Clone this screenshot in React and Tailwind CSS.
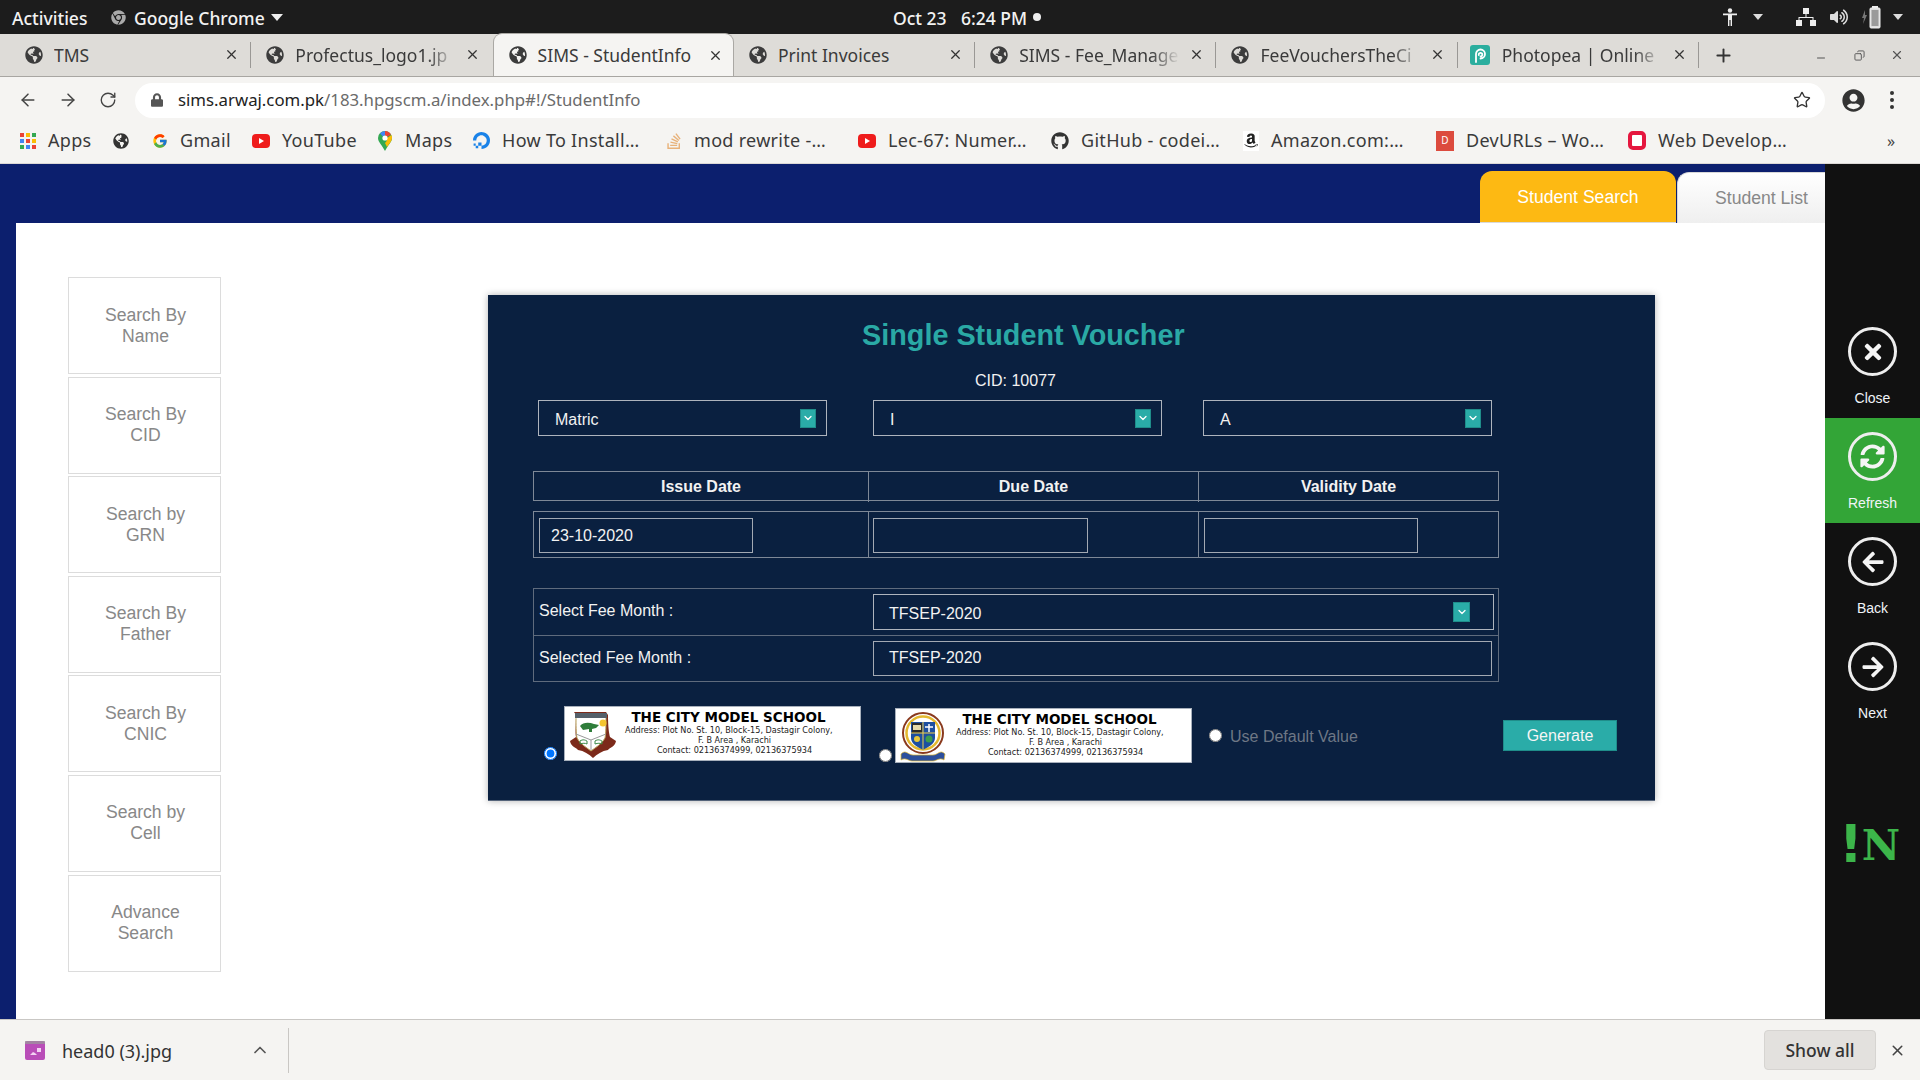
import React from "react";
import { FaGlobeAmericas, FaChrome, FaGithub, FaStackOverflow, FaVolumeUp, FaSyncAlt, FaArrowLeft, FaArrowRight, FaTimes, FaUserCircle, FaLock, FaAmazon } from "react-icons/fa";
import { FcGoogle } from "react-icons/fc";
import { SiDigitalocean } from "react-icons/si";
import { ArrowLeft, ArrowRight, RotateCw, Star, ChevronDown, ChevronUp, X, Plus, Minus, Copy } from "lucide-react";

const Globe = () => <FaGlobeAmericas className="w-[18px] h-[18px] text-[#3c3c3c] shrink-0" />;

const YT = () => (
  <svg width="18" height="16" viewBox="0 0 18 16" className="shrink-0">
    <rect x="0" y="1" width="18" height="14" rx="4" fill="#ef1c1c" />
    <path d="M7 5l5 3-5 3z" fill="#fff" />
  </svg>
);

function Tab({ title, active, fade, icon, sep }) {
  return (
    <div className={`relative w-[241.3px] h-[43px] flex items-center pl-[15px] shrink-0 ${active ? "bg-[#f5f4f2] border border-b-0 border-[#aaa8a4] rounded-t-[9px] z-10" : ""}`}>
      {icon || <Globe />}
      <span className={`ml-[11px] w-[161px] whitespace-nowrap overflow-hidden text-[17.5px] leading-[26px] text-[#3a3a3a] ${fade ? "[mask-image:linear-gradient(to_right,black_82%,transparent)]" : ""}`}>{title}</span>
      <X className="w-[15px] h-[15px] text-[#333] ml-[9px]" strokeWidth={2} />
      {sep && <span className="absolute right-0 top-[9px] h-[26px] w-px bg-[#9a9895]" />}
    </div>
  );
}

const Photopea = () => (
  <svg width="20" height="20" viewBox="0 0 20 20" className="shrink-0 -ml-[3px] mr-[1px]">
    <rect width="20" height="20" rx="3" fill="#2bae9e" />
    <path d="M6 17V9a4.5 4.5 0 1 1 4.5 4.5M8.8 10a1.8 1.8 0 1 1 1.8 1.4" fill="none" stroke="#fff" strokeWidth="1.8" strokeLinecap="round" />
  </svg>
);

const AppsIcon = () => {
  const c = ["#ea4335", "#fbbc05", "#34a853", "#4285f4", "#ea4335", "#fbbc05", "#34a853", "#4285f4", "#ea4335"];
  return (
    <svg width="16" height="16" viewBox="0 0 16 16" className="shrink-0">
      {c.map((f, i) => (
        <rect key={i} x={(i % 3) * 6} y={Math.floor(i / 3) * 6} width="4" height="4" fill={f} />
      ))}
    </svg>
  );
};

const MapsPin = () => (
  <svg width="16" height="20" viewBox="0 0 16 20" className="shrink-0">
    <path d="M8 0a7 7 0 0 1 7 7c0 4-4 7-7 13C5 14 1 11 1 7a7 7 0 0 1 7-7z" fill="#34a853" />
    <path d="M3 2.500A7 7 0 0 1 8 0v4.500a2.500 2.500 0 0 0-2 1z" fill="#4285f4" />
    <path d="M8 0a7 7 0 0 1 6 3.500L10 6a2.500 2.500 0 0 0-2-1.500z" fill="#ea4335" />
    <path d="M15 7c0 3-3 6-5 9L8 12c2-2 2-3 2-5l4.500-3c.3 1 .5 2 .5 3z" fill="#fbbc05" />
    <circle cx="8" cy="7" r="2.600" fill="#fff" />
  </svg>
);

const bookmarks = [
  { w: 93, icon: <AppsIcon />, t: "Apps" },
  { w: 39, icon: <FaGlobeAmericas className="w-4 h-4 text-[#333]" />, t: "" },
  { w: 100, icon: <FcGoogle className="w-4 h-4 shrink-0" />, t: "Gmail" },
  { w: 125, icon: <YT />, t: "YouTube" },
  { w: 96, icon: <MapsPin />, t: "Maps" },
  { w: 193, icon: <SiDigitalocean className="w-[17px] h-[17px] text-[#1a82e8] shrink-0" />, t: "How To Install…" },
  { w: 192, icon: <FaStackOverflow className="w-4 h-[18px] text-[#e8b27a] shrink-0" />, t: "mod rewrite -…" },
  { w: 193, icon: <YT />, t: "Lec-67: Numer…" },
  { w: 192, icon: <FaGithub className="w-[18px] h-[18px] text-[#333] shrink-0" />, t: "GitHub - codei…" },
  { w: 193, icon: <span className="w-4 h-5 bg-white flex items-center justify-center shrink-0"><FaAmazon className="w-[14px] h-[17px] text-[#222]" /></span>, t: "Amazon.com:…" },
  { w: 192, icon: <span className="w-[18px] h-[20px] bg-[#dc4b3e] text-white text-[10px] flex items-center justify-center shrink-0">D</span>, t: "DevURLs – Wo…" },
  { w: 193, icon: <span className="w-[18px] h-[19px] rounded-[5px] border-[4px] border-[#e5173f] bg-white shrink-0" />, t: "Web Develop…" },
];

function Arrow({ className = "" }) {
  return (
    <span className={`w-[16px] h-[19px] bg-[#2aaca8] border border-[#1f8d8a] flex items-center justify-center ${className}`}>
      <ChevronDown className="w-[12px] h-[12px] text-white" strokeWidth={2.5} />
    </span>
  );
}

function Select({ label, className = "" }) {
  return (
    <div className={`w-[289px] h-[36px] border border-[#aeb4bd] flex items-center justify-between pl-[16px] pr-[10px] text-[#f2f2f2] ${className}`}>
      <span className="pt-[3px]">{label}</span>
      <Arrow />
    </div>
  );
}

function Field({ value = "", className = "" }) {
  return (
    <div className={`h-[35px] border border-[#a3a9b3] flex items-center pl-[11px] text-[#f2f2f2] ${className}`}>{value}</div>
  );
}

const Crest1 = () => (
  <svg width="52" height="50" viewBox="0 0 52 50" className="shrink-0">
    <path d="M8 2h32l2 3c0 12 1 18 2 22l6 4c-1 6-6 6-8 9-6 1-11 4-15 8-4-4-9-7-15-8-2-3-7-3-8-9l6-4C9 23 10 15 10 5z" fill="#7c2a1a" />
    <path d="M10 5h30c0 10 0 18-1 23-3 6-9 9-14 13-5-4-11-7-14-13-1-5-1-13-1-23z" fill="#fff" stroke="#b9a05a" strokeWidth="1" />
    <rect x="9" y="3" width="32" height="5" fill="#55606a" />
    <path d="M14 16c3-4 9-4 14-2l5 1-3 3-4 1v3h-3v-3l-6 1z" fill="#2f7d3a" />
    <circle cx="37" cy="13" r="3.500" fill="#f4c430" />
    <path d="M10 24l15 6 15-6M25 30v10" stroke="#999" strokeWidth="1" fill="none" />
    <path d="M14 31c3-2 5-1 7 0v3c-2-1-4-1-7 0zM29 31c3-2 5-1 7 0v3c-2-1-4-1-7 0z" fill="none" stroke="#3a8a45" strokeWidth="1" />
  </svg>
);

const Crest2 = () => (
  <svg width="46" height="50" viewBox="0 0 46 50" className="shrink-0">
    <circle cx="23" cy="21" r="20" fill="#fff" stroke="#8a3a1e" strokeWidth="2" />
    <circle cx="23" cy="21" r="16.500" fill="#fff" stroke="#e4b92f" strokeWidth="2.500" />
    <path d="M11 10h24v16c0 6-7 9-12 12-5-3-12-6-12-12z" fill="#1d4fa0" />
    <rect x="12" y="11" width="10" height="10" fill="#2b2b2b" />
    <rect x="13" y="13" width="8" height="5" fill="#e5d9a8" />
    <path d="M29 12v8M25 15h8" stroke="#fff" strokeWidth="1.500" />
    <path d="M11 21h24M23 10v28" stroke="#f2d04a" strokeWidth="1" />
    <circle cx="29" cy="27" r="3.500" fill="#3d9c4d" />
    <circle cx="17" cy="27" r="3" fill="#e8c93a" />
    <path d="M1 42c5-5 7 1 12 1 6 0 15 0 20 0s7-6 12-1l-1 6c-4-3-8 1-11 1H12c-3 0-7-4-11-1z" fill="#2c4f9c" stroke="#e4b92f" strokeWidth=".7" />
  </svg>
);

function Banner({ crest, crestClass, className = "" }) {
  return (
    <div className={`w-[297px] h-[55px] bg-white border border-[#a8b0bc] flex text-black overflow-hidden font-['DejaVu_Sans',sans-serif] ${className}`}>
      <div className={`shrink-0 pt-[3px] ${crestClass}`}>{crest}</div>
      <div className="w-[207px] shrink-0 text-center text-[#222] text-[8.1px] leading-[10px] whitespace-nowrap">
        <div className="text-[13.5px] leading-[14px] font-bold text-black mt-[3px]">THE CITY MODEL SCHOOL</div>
        <div className="mt-[1px]">Address: Plot No. St. 10, Block-15, Dastagir Colony,</div>
        <div className="pl-[12px]">F. B Area , Karachi</div>
        <div className="pl-[12px]">Contact: 02136374999, 02136375934</div>
      </div>
    </div>
  );
}

function SideItem({ a, b }) {
  return (
    <div className="w-[153px] h-[97px] border border-[#dcdcdc] flex flex-col items-center justify-center text-[17.6px] leading-[21px] text-[#888] pl-[2px]">
      <span>{a}</span>
      <span>{b}</span>
    </div>
  );
}

function Action({ icon, label, active }) {
  return (
    <div className={`h-[105px] flex flex-col items-center pt-[14px] ${active ? "bg-[#33a537]" : ""}`}>
      <span className="w-[49px] h-[49px] rounded-full border-[3px] border-[#eee] flex items-center justify-center text-[#f5f5f5]">{icon}</span>
      <span className="mt-[13px] text-[14px] leading-[18px] text-[#f0f4f8]">{label}</span>
    </div>
  );
}

export default function App() {
  return (
    <div className="w-[1920px] h-[1080px] overflow-hidden flex flex-col font-['Noto_Sans',sans-serif] bg-white">
      {/* OS bar */}
      <div className="h-[34px] bg-[#1c1c1c] flex items-center text-[#f2f2f2] text-[17.5px] leading-[24px] font-medium shrink-0">
        <div className="w-[893px] flex items-center shrink-0">
          <span className="ml-[12px] w-[99px] pt-[2px]">Activities</span>
          <FaChrome className="w-[15px] h-[15px] text-[#aaa]" />
          <span className="ml-[8px] pt-[2px]">Google Chrome</span>
          <span className="ml-[6px] w-0 h-0 border-x-[6px] border-x-transparent border-t-[7px] border-t-[#eee]" />
        </div>
        <span className="w-[68px] pt-[2px] shrink-0">Oct 23</span>
        <span className="w-[72px] pt-[2px] shrink-0">6:24 PM</span>
        <span className="w-[8px] h-[8px] rounded-full bg-[#eee] shrink-0" />
        <div className="ml-auto flex items-center mr-[10px]">
          <span className="w-[28px] flex justify-center">
            <svg width="14" height="18" viewBox="0 0 14 18" fill="#eee"><circle cx="7" cy="2.5" r="2.2" /><path d="M0 5.500h14v1.800H9V18H7.600v-6H6.400v6H5V7.300H0z" /></svg>
          </span>
          <span className="w-[28px] flex justify-center"><span className="w-0 h-0 border-x-[5.5px] border-x-transparent border-t-[6px] border-t-[#ddd]" /></span>
          <span className="w-[20px]" />
          <span className="w-[28px] flex justify-center">
            <svg width="20" height="18" viewBox="0 0 20 18" fill="#eee"><rect x="7" y="0" width="6" height="6" /><rect x="0" y="12" width="6" height="6" /><rect x="14" y="12" width="6" height="6" /><path d="M9.500 6h1v3H17.500v3h-1V10h-13v2h-1V9h7z" /></svg>
          </span>
          <span className="w-[38px] flex justify-center"><FaVolumeUp className="w-[18px] h-[16px] text-[#ddd]" /></span>
          <span className="w-[28px] flex justify-center">
            <svg width="20" height="24" viewBox="0 0 20 24" fill="none"><path d="M3 5L0 13h2l-1 6 4-9H3z" fill="#777" /><rect x="8" y="3" width="10" height="20" rx="1" fill="#ddd" stroke="#eee" /><rect x="10" y="1" width="6" height="2" fill="#eee" /><rect x="9.500" y="5" width="7" height="16" fill="#1c1c1c" opacity=".35" /></svg>
          </span>
          <span className="w-[24px] flex justify-center"><span className="w-0 h-0 border-x-[5.5px] border-x-transparent border-t-[6px] border-t-[#ddd]" /></span>
        </div>
      </div>

      {/* Tab strip */}
      <div className="h-[43px] bg-[#dedcd8] border-b border-[#a8a6a2] flex items-end pl-[10px] shrink-0">
        <Tab title="TMS" sep />
        <Tab title="Profectus_logo1.jp" fade />
        <Tab title="SIMS - StudentInfo" active />
        <Tab title="Print Invoices" sep />
        <Tab title="SIMS - Fee_Manage" fade sep />
        <Tab title="FeeVouchersTheCi" fade sep />
        <Tab title="Photopea | Online" fade sep icon={<Photopea />} />
        <div className="w-[48px] h-[42px] flex items-center justify-center"><Plus className="w-[21px] h-[21px] text-[#333]" strokeWidth={2.2} /></div>
        <div className="ml-auto h-[42px] flex items-center pr-[4px] text-[#555]">
          <span className="w-[38px] flex justify-center"><Minus className="w-[12px] h-[12px] mt-[6px]" /></span>
          <span className="w-[38px] flex justify-center"><Copy className="w-[11px] h-[11px] -scale-x-100" /></span>
          <span className="w-[38px] flex justify-center"><X className="w-[14px] h-[14px]" /></span>
        </div>
      </div>

      {/* Toolbar */}
      <div className="h-[46px] bg-[#f5f4f2] flex items-center shrink-0">
        <div className="w-[135px] flex items-center text-[#444] shrink-0">
          <ArrowLeft className="w-[20px] h-[20px] ml-[18px]" strokeWidth={1.8} />
          <ArrowRight className="w-[20px] h-[20px] ml-[20px]" strokeWidth={1.8} />
          <RotateCw className="w-[18px] h-[18px] ml-[21px]" strokeWidth={1.8} />
        </div>
        <div className="w-[1690px] h-[35px] rounded-full bg-white flex items-center pl-[16px] pr-[14px] shrink-0">
          <FaLock className="w-[12px] h-[14px] text-[#555]" />
          <span className="ml-[15px] text-[16.8px] text-[#222] whitespace-nowrap">sims.arwaj.com.pk<span className="text-[#6b6b6b]">/183.hpgscm.a/index.php#!/StudentInfo</span></span>
          <Star className="w-[18px] h-[18px] ml-auto text-[#333]" strokeWidth={1.8} />
        </div>
        <FaUserCircle className="w-[23px] h-[23px] ml-[17px] text-[#333]" />
        <span className="ml-[25px] flex flex-col gap-[3px]">
          <span className="w-[4px] h-[4px] rounded-full bg-[#333]" />
          <span className="w-[4px] h-[4px] rounded-full bg-[#333]" />
          <span className="w-[4px] h-[4px] rounded-full bg-[#333]" />
        </span>
      </div>

      {/* Bookmarks */}
      <div className="h-[41px] bg-[#f5f4f2] border-b border-[#dcd8d6] flex items-center pl-[20px] pb-[5px] text-[18px] tracking-[0.3px] text-[#3a3a3a] shrink-0">
        {bookmarks.map((b, i) => (
          <div key={i} className="flex items-center gap-[12px] shrink-0 whitespace-nowrap" style={{ width: b.w }}>
            {b.icon}
            {b.t && <span>{b.t}</span>}
          </div>
        ))}
        <span className="ml-[66px] text-[#444] text-[16px]">»</span>
      </div>

      {/* Page */}
      <div className="flex-1 min-h-0 flex font-['Liberation_Sans',sans-serif] text-[16px]">
        <div className="w-[1825px] bg-[#0c1f6e] flex flex-col shrink-0">
          <div className="h-[59px] flex items-end justify-end shrink-0">
            <div className="w-[196px] h-[52px] pt-[2px] rounded-t-[12px] bg-[#fdb913] text-white text-[17.6px] flex items-center justify-center border-b border-[#d9d9d9]">Student Search</div>
            <div className="w-[148px] ml-px h-[51px] pl-[20px] rounded-tl-[12px] bg-gradient-to-b from-white to-[#efefef] border-t border-l border-[#d8d8d8] text-[#888] text-[17.6px] flex items-center justify-center">Student List</div>
          </div>
          <div className="flex-1 min-h-0 ml-[16px] bg-white flex items-start">
            <div className="ml-[52px] mt-[54px] flex flex-col gap-[2.6px] shrink-0">
              <SideItem a="Search By" b="Name" />
              <SideItem a="Search By" b="CID" />
              <SideItem a="Search by" b="GRN" />
              <SideItem a="Search By" b="Father" />
              <SideItem a="Search By" b="CNIC" />
              <SideItem a="Search by" b="Cell" />
              <SideItem a="Advance" b="Search" />
            </div>

            {/* Card */}
            <div className="ml-[267px] mt-[72px] w-[1167px] h-[506px] bg-[#0a2040] border-b border-[#55647a] shadow-[0_0_7px_rgba(0,0,0,0.3)] text-[#f2f2f2] shrink-0">
              <h2 className="pl-[374px] pt-[24px] text-[28.8px] leading-[33px] font-bold text-[#2aa9a5] whitespace-nowrap">Single Student Voucher</h2>
              <div className="pl-[487px] mt-[20px] leading-[18px]">CID: 10077</div>
              <div className="pl-[50px] mt-[10px] flex">
                <Select label="Matric" />
                <Select label="I" className="ml-[46px]" />
                <Select label="A" className="ml-[41px]" />
              </div>

              <div className="ml-[45px] mt-[35px] w-[966px] h-[30px] border border-[#7e8897] grid grid-cols-[334px_330px_1fr] font-bold text-center leading-[30px]">
                <div>Issue Date</div>
                <div className="border-l border-[#7e8897]">Due Date</div>
                <div className="border-l border-[#7e8897]">Validity Date</div>
              </div>
              <div className="ml-[45px] mt-[10px] w-[966px] h-[47px] border border-[#7e8897] grid grid-cols-[334px_330px_1fr] items-center">
                <div className="pl-[5px] pt-[2px]"><Field value="23-10-2020" className="w-[214px]" /></div>
                <div className="pl-[4px] pt-[2px] h-full flex items-center border-l border-[#7e8897]"><Field className="w-[215px]" /></div>
                <div className="pl-[5px] pt-[2px] h-full flex items-center border-l border-[#7e8897]"><Field className="w-[214px]" /></div>
              </div>

              <div className="ml-[45px] mt-[30px] w-[966px] h-[94px] border border-[#5f6b7d] flex flex-col">
                <div className="h-[47px] flex border-b border-[#5f6b7d]">
                  <div className="w-[339px] pl-[5px] pt-[12px] leading-[20px]">Select Fee Month :</div>
                  <div className="pt-[5px]">
                    <div className="w-[621px] h-[36px] border border-[#aeb4bd] flex items-center pl-[15px]">
                      <span className="pt-[4px]">TFSEP-2020</span>
                      <Arrow className="ml-auto mr-[23px] h-[20px] w-[17px]" />
                    </div>
                  </div>
                </div>
                <div className="h-[46px] flex">
                  <div className="w-[339px] pl-[5px] pt-[12px] leading-[20px]">Selected Fee Month :</div>
                  <div className="pt-[5px]"><Field value="TFSEP-2020" className="w-[619px] pl-[15px]" /></div>
                </div>
              </div>

              <div className="mt-[24px] pl-[56px] flex items-start">
                <input type="radio" name="head" defaultChecked className="w-[13px] h-[13px] m-0 mt-[41px] shrink-0" />
                <Banner crest={<Crest1 />} crestClass="w-[60px] pl-[1px]" className="ml-[7px]" />
                <input type="radio" name="head" className="w-[13px] h-[13px] m-0 mt-[43px] ml-[18px] shrink-0" />
                <Banner crest={<Crest2 />} crestClass="w-[60px] pl-[4px]" className="ml-[3px] mt-[2px]" />
                <input type="radio" name="def" className="w-[13px] h-[13px] m-0 mt-[23px] ml-[17px] shrink-0" />
                <span className="ml-[8px] mt-[22px] text-[#6e7785] leading-[18px] whitespace-nowrap">Use Default Value</span>
                <button className="ml-auto mr-[38px] mt-[14px] w-[114px] h-[31px] bg-[#2aaca8] border border-[#1f8d8a] text-[#f5f5f5] text-[16px] shrink-0">Generate</button>
              </div>
            </div>
          </div>
        </div>

        {/* Right rail */}
        <div className="w-[95px] bg-[#111] pt-[149px] flex flex-col shrink-0">
          <Action icon={<FaTimes className="w-[24px] h-[24px]" />} label="Close" />
          <Action icon={<FaSyncAlt className="w-[25px] h-[25px]" />} label="Refresh" active />
          <Action icon={<FaArrowLeft className="w-[24px] h-[24px]" />} label="Back" />
          <Action icon={<FaArrowRight className="w-[24px] h-[24px]" />} label="Next" />
          <div className="mt-[89px] pl-[14px] flex items-end font-bold text-[#3cb54a] leading-none">
            <span className="font-['DejaVu_Sans',sans-serif] text-[52px] leading-[44px] -mr-[1px]">!</span>
            <span className="font-['DejaVu_Serif',serif] text-[42px] leading-[40px] tracking-[-2px]">N</span>
          </div>
        </div>
      </div>

      {/* Download bar */}
      <div className="h-[61px] bg-[#f5f4f2] border-t border-[#c9c7c4] flex items-center shrink-0">
        <svg width="20" height="19" viewBox="0 0 20 19" className="ml-[25px] shrink-0">
          <rect width="20" height="19" rx="2" fill="#b94db8" />
          <rect width="20" height="3" fill="#9a9a9a" opacity=".7" />
          <path d="M5 14l3-3 2 1 2 2zM12 7h4v4h-4z" fill="#f3d3f3" />
        </svg>
        <span className="ml-[17px] pt-[2px] w-[118px] text-[18px] text-[#333] whitespace-nowrap">head0 (3).jpg</span>
        <ChevronUp className="w-[20px] h-[20px] ml-[70px] text-[#555]" />
        <span className="ml-[18px] w-px h-[45px] bg-[#c9c7c4]" />
        <div className="ml-auto w-[112px] h-[40px] rounded-[4px] bg-[#e3e1de] border border-[#d6d4d1] flex items-center justify-center text-[17.5px] text-[#333] font-medium">Show all</div>
        <X className="w-[17px] h-[17px] ml-[13px] mr-[14px] text-[#444]" strokeWidth={2.2} />
      </div>
    </div>
  );
}
